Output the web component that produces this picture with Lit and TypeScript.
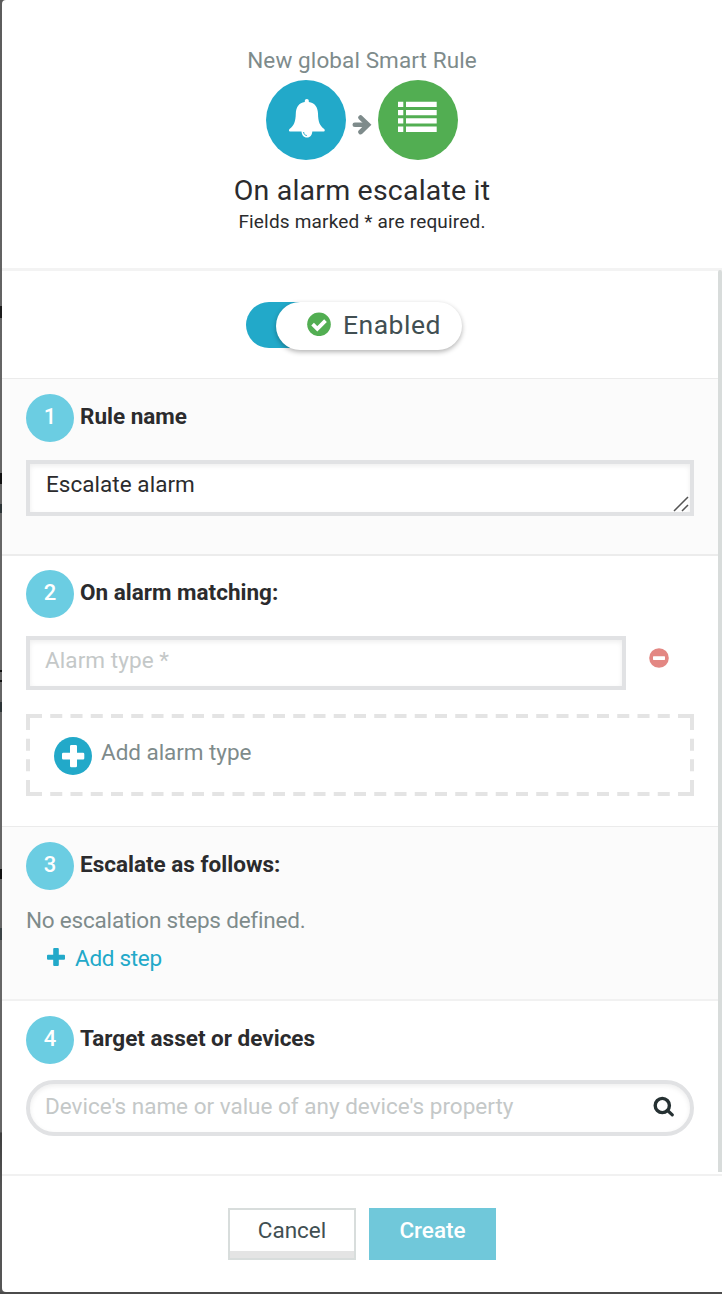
import { LitElement, html, css } from "lit";
import { customElement, property } from "lit/decorators.js";

@customElement("step-heading")
class StepHeading extends LitElement {
  @property() num = "";
  @property() label = "";
  static styles = css`
    :host { display: flex; gap: 6px; height: 48px; }
    .num { width: 48px; height: 48px; border-radius: 50%; background: #6bcde2; color: #fff; text-align: center; font-size: 22px; font-weight: 500; line-height: 45px; }
    .label { font-weight: 700; font-size: 22.5px; line-height: 44px; color: #2b2b2d; letter-spacing: 0; white-space: nowrap; }
  `;
  render() {
    return html`<div class="num">${this.num}</div><div class="label">${this.label}</div>`;
  }
}

@customElement("app-root")
class AppRoot extends LitElement {
  static styles = css`
    * { box-sizing: border-box; }
    :host { display: flex; width: 722px; height: 1294px; overflow: hidden; font-family: Roboto, "Open Sans", sans-serif; color: #2b2b2d; background: #5a5a5a; border-bottom: 2px solid #4b4b4b; box-sizing: border-box; }
    .edge {
      width: 2px; flex: none;
      background:
        linear-gradient(#1c1c1c, #1c1c1c) 0 306px / 2px 12px no-repeat,
        linear-gradient(#111, #111) 0 473px / 2px 11px no-repeat,
        linear-gradient(#2c3436, #2c3436) 0 504px / 2px 9px no-repeat,
        linear-gradient(#111, #111) 0 670px / 2px 2px no-repeat,
        linear-gradient(#111, #111) 0 680px / 2px 2px no-repeat,
        linear-gradient(#2c3436, #2c3436) 0 702px / 2px 10px no-repeat,
        linear-gradient(#111, #111) 0 869px / 2px 10px no-repeat,
        linear-gradient(#3c4446, #3c4446) 0 928px / 2px 12px no-repeat,
        linear-gradient(#5c5c5c, #666 30%, #666 87.6%, #3f3f3f 87.7%, #555 92%);
    }
    .modal { flex: 1; display: flex; flex-direction: column; min-width: 0; background: #fff; border-radius: 4px 0 0 4px; overflow: hidden; }
    header { height: 271px; border-bottom: 3px solid #f3f3f3; padding-top: 45px; display: flex; flex-direction: column; align-items: center; white-space: nowrap; }
    .kicker { font-size: 22.5px; line-height: 30px; height: 35px; letter-spacing: 0.1px; color: #7e8b8b; }
    .icons { display: flex; gap: 6px; align-items: center; height: 80px; }
    .disc { width: 80px; height: 80px; border-radius: 50%; background: #22a9c9; }
    .disc.green { background: #52ae52; }
    .arrow { width: 20px; height: 20px; margin-top: 9px; }
    svg { display: block; }
    .title { font-size: 28.5px; line-height: 34px; letter-spacing: 0.2px; margin-top: 14px; }
    .note { font-size: 19px; line-height: 24px; letter-spacing: 0.18px; margin-top: 2px; }
    .body { height: 903px; display: flex; }
    .sections { width: 716px; }
    .bar { width: 4px; height: 902px; background: #d8dcdb; border-radius: 2px 2px 0 0; margin-top: -1px; }
    section { padding: 15px 24px 0; border-top: 1px solid #ebebeb; }
    section.alt { background: #fbfbfb; }
    .switch { height: 107px; padding: 31px 0 0 244px; }
    .track { width: 214px; height: 46px; border-radius: 23px; background: linear-gradient(90deg, #22a9c9 60%, #fff 90%); padding-left: 30px; }
    .knob { width: 186px; height: 48px; border-radius: 24px; background: #fff; box-shadow: 0 2px 5px rgba(0,0,0,.3); display: flex; gap: 12px; padding: 10px 0 0 31px; font-size: 26.5px; line-height: 25px; letter-spacing: 0.5px; color: #414f52; }
    .s1 { height: 176px; }
    .s2 { height: 272px; padding-top: 14px; border-top: 2px solid #ececec; }
    .s3 { height: 173px; }
    .s4 { height: 175px; border-top: 2px solid #f1f1f1; }
    .field { height: 56px; border: 4px solid #e1e2e4; background: #fff; box-shadow: inset 0 2px 5px rgba(0,0,0,.07); margin-top: 18px; font-size: 22.5px; line-height: 41px; padding-left: 16px; letter-spacing: 0.04px; display: flex; justify-content: space-between; white-space: nowrap; }
    .grip { align-self: flex-end; margin: 0 0 0 0; }
    .row { display: flex; gap: 23px; }
    .row .field { width: 600px; height: 54px; padding-left: 15px; color: #c4c8c8; letter-spacing: 0.08px; }
    .minus { margin-top: 30px; }
    .add { position: relative; margin-top: 24px; height: 82px; display: flex; gap: 9px; padding: 23px 0 0 28px; font-size: 22.5px; line-height: 31px; letter-spacing: -0.05px; color: #7e8b8b; }
    .dash { position: absolute; left: 0; top: 0; }
    .none { font-size: 22.5px; line-height: 32px; margin-top: 14px; letter-spacing: -0.2px; color: #7e8b8b; }
    .link { display: flex; gap: 10px; padding-left: 21px; margin-top: 6px; color: #22a9c9; font-size: 22.5px; line-height: 32px; letter-spacing: -0.3px; }
    .link svg { margin-top: 6px; }
    .field.search { border-radius: 28px; margin-top: 16px; color: #c4c8c8; padding-left: 15px; letter-spacing: 0; line-height: 44px; }
    .search svg { margin: 12px 15px 0 0; }
    footer { border-top: 2px solid #f1f1f1; flex: 1; display: flex; justify-content: center; gap: 13px; padding-top: 32px; font-size: 22.5px; }
    .btn { width: 128px; height: 52px; text-align: center; line-height: 40px; letter-spacing: 0; border: 2px solid #d8dddc; color: #414f52; box-shadow: inset 0 -7px #e4e4e4; }
    .btn.primary { width: 127px; border: 0; background: #70c8da; color: #fff; font-weight: 500; line-height: 44px; box-shadow: none; }
  `;

  render() {
    return html`
      <div class="edge"></div>
      <div class="modal">
        <header>
          <div class="kicker">New global Smart Rule</div>
          <div class="icons">
            <div class="disc">
              <svg width="80" height="80" viewBox="266 80 80 80">
                <path fill="#fff" d="M306.8 99c1.3 0 2 .9 2 2v1.1c6 .9 9 5.2 9.2 11.4.2 8.500 1.700 12 6.200 15.500.8.700.9 2.500-.5 2.500H290c-1.300 0-1.300-1.800-.5-2.500 4.600-3.500 6.100-7.500 6.300-15.500.2-6.200 3.100-10.500 9-11.400V101c0-1.100.8-2 2-2z"/>
                <path fill="#fff" d="M301.500 131h10.800c0 3.800-2 6.500-5.400 6.500s-5.400-2.700-5.400-6.500z"/>
                <path fill="none" stroke="#22a9c9" stroke-width="1" d="M303.600 132c.2 2 1.300 3.300 3.200 3.500"/>
              </svg>
            </div>
            <svg class="arrow" viewBox="352 115 20 20"><path fill="none" stroke="#7e8b8b" stroke-width="4.600" stroke-linecap="round" d="M354.800 124.800H367"/><path fill="none" stroke="#7e8b8b" stroke-width="4.800" stroke-linecap="round" d="M360.600 117.600L368 124.800L360.600 132"/></svg>
            <div class="disc green">
              <svg width="80" height="80" viewBox="378 80 80 80" fill="#fff">
                <path d="M398 101.700h5.300v5.300H398zM406 101.700h30.700v5.300H406zM398 110h5.300v5.300H398zM406 110h30.700v5.300H406zM398 118.300h5.300v5.300H398zM406 118.300h30.700v5.300H406zM398 126.600h5.300v5.300H398zM406 126.600h30.700v5.300H406z"/>
              </svg>
            </div>
          </div>
          <div class="title">On alarm escalate it</div>
          <div class="note">Fields marked * are required.</div>
        </header>
        <div class="body">
          <div class="sections">
            <div class="switch">
              <div class="track"><div class="knob">
                <svg width="24" height="24" viewBox="0 0 24 24"><circle cx="12" cy="12.300" r="11.800" fill="#52ae52"/><path d="M5.600 12.200l4.700 4.600 8.200-8.200" fill="none" stroke="#fff" stroke-width="3.800"/></svg>
                <span>Enabled</span>
              </div></div>
            </div>
            <section class="alt s1">
              <step-heading num="1" label="Rule name"></step-heading>
              <div class="field"><span>Escalate alarm</span>
                <svg class="grip" width="17" height="16" viewBox="0 0 17 16"><path d="M1 15L15 1M9 15L15 9" stroke="#555" stroke-width="1.500" fill="none"/></svg>
              </div>
            </section>
            <section class="s2">
              <step-heading num="2" label="On alarm matching:"></step-heading>
              <div class="row">
                <div class="field">Alarm type *</div>
                <svg class="minus" width="20" height="20" viewBox="0 0 20 20"><circle cx="10" cy="10" r="9.800" fill="#e38783"/><rect x="4" y="8.300" width="12" height="3.600" rx=".6" fill="#fff"/></svg>
              </div>
              <div class="add">
                <svg class="dash" width="668" height="82" fill="none" stroke="#e4e4e4" stroke-width="4">
                  <path stroke-dasharray="12 8.250" d="M4 2H664M4 80H664"/>
                  <path stroke-dasharray="12 8.667" d="M2 4V78M666 4V78"/>
                  <path d="M0 2H4M664 2H668M0 80H4M664 80H668"/>
                </svg>
                <svg width="38" height="38" viewBox="0 0 38 38"><circle cx="19" cy="19" r="19" fill="#22a9c9"/><path transform="translate(8 8)" fill="#fff" d="M9.300 0h4.400q1.300 0 1.300 1.300V7.800h6Q22.300 7.800 22.300 9v4.200q0 1.300-1.300 1.300h-6v6.500q0 1.300-1.300 1.300H9.300Q8 22.300 8 21v-6.500H1.300Q0 14.500 0 13.200V9Q0 7.800 1.300 7.800H8V1.300Q8 0 9.300 0z"/></svg>
                <span>Add alarm type</span>
              </div>
            </section>
            <section class="alt s3">
              <step-heading num="3" label="Escalate as follows:"></step-heading>
              <div class="none">No escalation steps defined.</div>
              <div class="link">
                <svg width="18" height="18" viewBox="0 0 18 18"><path fill="#22a9c9" d="M7.200 0h3.600q1 0 1 1v5.700h5.200q1 0 1 1v3q0 1-1 1h-5.200V17q0 1-1 1H7.200q-1 0-1-1v-5.300H1q-1 0-1-1v-3q0-1 1-1h5.200V1q0-1 1-1z"/></svg>
                <span>Add step</span>
              </div>
            </section>
            <section class="s4">
              <step-heading num="4" label="Target asset or devices"></step-heading>
              <div class="field search"><span>Device's name or value of any device's property</span>
                <svg width="22" height="22" viewBox="653 1096 22 22"><circle cx="662.300" cy="1105.500" r="7.100" fill="none" stroke="#263133" stroke-width="3.400"/><path d="M667.600 1110.500l4.700 4.400" stroke="#263133" stroke-width="3.200" stroke-linecap="round"/></svg>
              </div>
            </section>
          </div>
          <div class="bar"></div>
        </div>
        <footer>
          <div class="btn">Cancel</div>
          <div class="btn primary">Create</div>
        </footer>
      </div>`;
  }
}
